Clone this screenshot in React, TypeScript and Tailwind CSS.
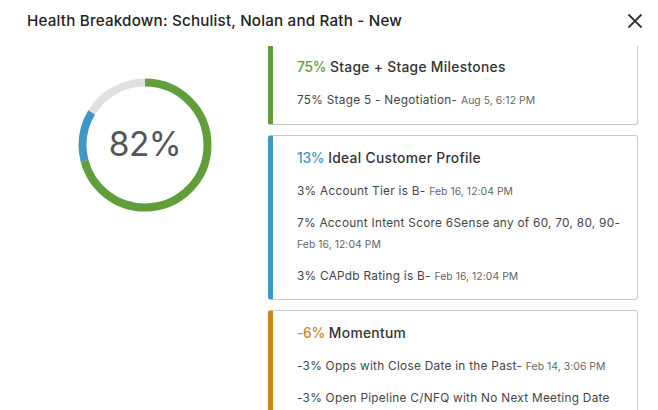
const F = "[font-family:Inter,'Liberation_Sans',sans-serif]";

function Row({ text, date, wrap }: { text: string; date?: string; wrap?: boolean }) {
  return (
    <div className={`text-[11.8px] leading-[21px] text-[#444444] tracking-[0.28px] ${wrap ? "w-[325px]" : "whitespace-nowrap"}`}>
      {text}{" "}
      {date ? <span className="inline-block text-[10.4px] text-[#666666] tracking-[0.05px]">{date}</span> : null}
    </div>
  );
}

function Card({
  pct, title, barClass, pctClass, children, h, top,
}: { pct: string; title: string; barClass: string; pctClass: string; children: React.ReactNode; h: string; top: string }) {
  return (
    <div className={`shrink-0 bg-white border border-[#c9c9c9] border-l-[5px] rounded-[3px] pl-[24px] ${top} ${barClass} ${h}`}>
      <div className="text-[13.8px] leading-[20px] font-medium text-[#333333] tracking-[0.3px] whitespace-nowrap">
        <span className={`${pctClass} tracking-[-0.3px]`}>{pct}</span> {title}
      </div>
      <div className="mt-[13px] flex flex-col gap-[11px]">{children}</div>
    </div>
  );
}

function Donut() {
  const r = 62.5;
  const c = 2 * Math.PI * r;
  const segs = [
    { color: "#e0e0e0", from: 0.836, to: 1 },
    { color: "#3f97c5", from: 0.708, to: 0.836 },
    { color: "#5f9e3a", from: 0, to: 0.708 },
  ];
  return (
    <div className="relative w-[134px] h-[134px]">
      <svg width="134" height="134" viewBox="0 0 134 134" className="-rotate-90">
        {segs.map((s) => (
          <circle
            key={s.color}
            cx="67"
            cy="67"
            r={r}
            fill="none"
            stroke={s.color}
            strokeWidth="8"
            strokeDasharray={`${(s.to - s.from) * c} ${c}`}
            strokeDashoffset={-s.from * c}
          />
        ))}
      </svg>
      <div className="absolute inset-0 flex items-center justify-center text-[33.5px] leading-none text-[#555555] tracking-[-0.6px]">
        82%
      </div>
    </div>
  );
}

export default function App() {
  return (
    <div className={`w-[658px] h-[410px] bg-white overflow-hidden flex flex-col ${F}`}>
      <div className="h-[46px] shrink-0 flex items-start justify-between pl-[27px] pr-[15px] pt-[11px]">
        <div className="text-[15.2px] leading-[20px] font-medium text-[#222222] tracking-[0.19px] whitespace-nowrap">
          Health Breakdown: Schulist, Nolan and Rath - New
        </div>
        <svg width="16" height="16" viewBox="0 0 16 16" className="mt-[2px]" fill="none" stroke="#333333" strokeWidth="1.8">
          <path d="M1.5 1.5 L14.5 14.5 M14.5 1.5 L1.5 14.5" />
        </svg>
      </div>
      <div className="flex-1 flex min-h-0">
        <div className="w-[268px] shrink-0 pl-[78px] pt-[32px]">
          <Donut />
        </div>
        <div className="w-[370px] shrink-0 overflow-hidden flex flex-col gap-[10px]">
          <Card top="pt-[11px]" pct="75%" title="Stage + Stage Milestones" barClass="border-l-[#5f9e3a] border-t-0 rounded-t-none" pctClass="text-[#5f9e3a]" h="h-[79px]">
            <Row text="75% Stage 5 - Negotiation-" date="Aug 5, 6:12 PM" />
          </Card>
          <Card top="pt-[12px]" pct="13%" title="Ideal Customer Profile" barClass="border-l-[#3f97c5]" pctClass="text-[#3f97c5]" h="h-[165px]">
            <Row text="3% Account Tier is B-" date="Feb 16, 12:04 PM" />
            <Row text="7% Account Intent Score 6Sense any of 60, 70, 80, 90-" date="Feb 16, 12:04 PM" wrap />
            <Row text="3% CAPdb Rating is B-" date="Feb 16, 12:04 PM" />
          </Card>
          <Card top="pt-[12px]" pct="-6%" title="Momentum" barClass="border-l-[#d08518]" pctClass="text-[#d08518]" h="h-[140px]">
            <Row text="-3% Opps with Close Date in the Past-" date="Feb 14, 3:06 PM" />
            <Row text="-3% Open Pipeline C/NFQ with No Next Meeting Date" />
          </Card>
        </div>
      </div>
    </div>
  );
}
